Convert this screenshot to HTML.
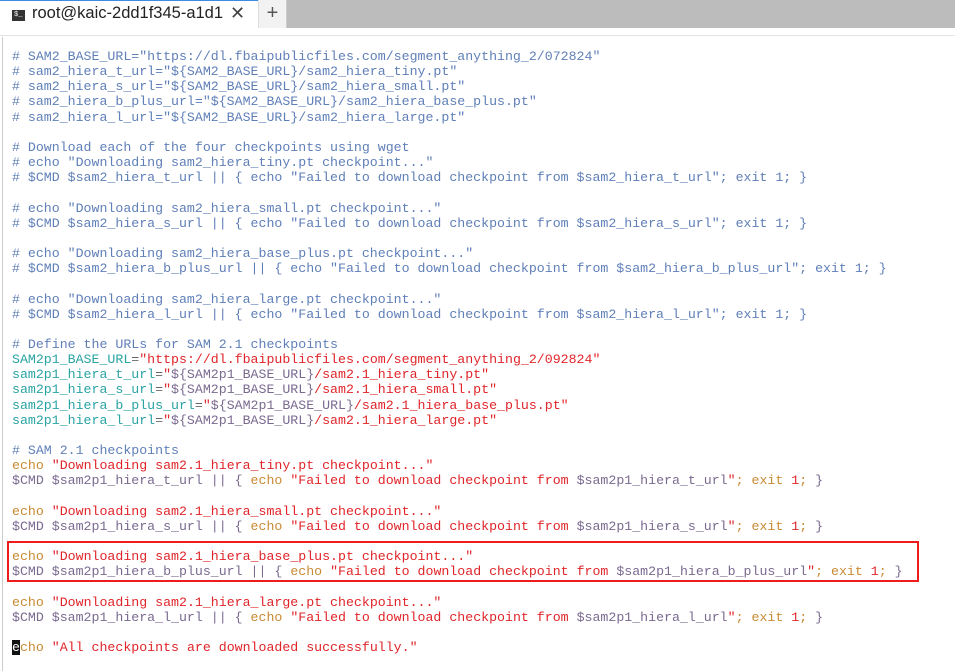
<!DOCTYPE html>
<html><head><meta charset="utf-8"><style>
*{margin:0;padding:0;box-sizing:border-box}
body{width:955px;height:671px;background:#fff;overflow:hidden;position:relative;font-family:"Liberation Mono",monospace}
.bar{position:absolute;left:0;top:0;width:955px;height:28px;background:#bcbcbc}
.tab{position:absolute;left:0;top:0;width:258px;height:28px;background:#fff;border-top:1px solid #3c8ce6}
.tab .ic{position:absolute;left:12px;top:9px;width:13px;height:11px;background:#333;color:#fff;font-size:7px;line-height:11px;padding-left:2px}
.tab .t{position:absolute;left:32px;top:3px;font-family:"Liberation Sans",sans-serif;font-size:16.5px;color:#222}
.tab .x{position:absolute;left:230px;top:2px;font-family:"Liberation Sans",sans-serif;font-size:18px;color:#444}
.plus{position:absolute;left:258px;top:0;width:29px;height:28px;background:#f2f2f2;border-left:1px solid #ddd;border-right:1px solid #ccc;text-align:center;font-family:"Liberation Sans",sans-serif;font-size:20px;line-height:26px;color:#555}
.sep{position:absolute;left:0;top:28px;width:955px;height:8px;background:#fff;border-bottom:1px solid #e2e2e2}
.lb{position:absolute;left:2px;top:37px;width:1px;height:634px;background:#ccc}
pre{position:absolute;left:12px;top:49px;font-family:"Liberation Mono",monospace;font-size:13.25px;line-height:15.15px;color:#333}
.c{color:#5f7fb8}.r{color:#e0252a}.o{color:#c98a33}.p{color:#7a6a90}.g{color:#2aa3a3}.k{color:#666}
.box{position:absolute;left:7px;top:541px;width:912px;height:41px;border:2px solid #ee1c1c}
.cur{background:#111;color:#fff}
</style></head><body>
<div class="bar"></div>
<div class="tab"><div class="ic">$_</div><div class="t">root@kaic-2dd1f345-a1d1</div><div class="x">✕</div></div>
<div class="plus">+</div>
<div class="sep"></div>
<div class="lb"></div>
<pre><span class="c"># SAM2_BASE_URL="https://dl.fbaipublicfiles.com/segment_anything_2/072824"
# sam2_hiera_t_url="${SAM2_BASE_URL}/sam2_hiera_tiny.pt"
# sam2_hiera_s_url="${SAM2_BASE_URL}/sam2_hiera_small.pt"
# sam2_hiera_b_plus_url="${SAM2_BASE_URL}/sam2_hiera_base_plus.pt"
# sam2_hiera_l_url="${SAM2_BASE_URL}/sam2_hiera_large.pt"

# Download each of the four checkpoints using wget
# echo "Downloading sam2_hiera_tiny.pt checkpoint..."
# $CMD $sam2_hiera_t_url || { echo "Failed to download checkpoint from $sam2_hiera_t_url"; exit 1; }

# echo "Downloading sam2_hiera_small.pt checkpoint..."
# $CMD $sam2_hiera_s_url || { echo "Failed to download checkpoint from $sam2_hiera_s_url"; exit 1; }

# echo "Downloading sam2_hiera_base_plus.pt checkpoint..."
# $CMD $sam2_hiera_b_plus_url || { echo "Failed to download checkpoint from $sam2_hiera_b_plus_url"; exit 1; }

# echo "Downloading sam2_hiera_large.pt checkpoint..."
# $CMD $sam2_hiera_l_url || { echo "Failed to download checkpoint from $sam2_hiera_l_url"; exit 1; }

# Define the URLs for SAM 2.1 checkpoints</span>
<span class="g">SAM2p1_BASE_URL</span><span class="k">=</span><span class="r">"https://dl.fbaipublicfiles.com/segment_anything_2/092824"</span>
<span class="g">sam2p1_hiera_t_url</span><span class="k">=</span><span class="r">"</span><span class="p">${SAM2p1_BASE_URL}</span><span class="r">/sam2.1_hiera_tiny.pt"</span>
<span class="g">sam2p1_hiera_s_url</span><span class="k">=</span><span class="r">"</span><span class="p">${SAM2p1_BASE_URL}</span><span class="r">/sam2.1_hiera_small.pt"</span>
<span class="g">sam2p1_hiera_b_plus_url</span><span class="k">=</span><span class="r">"</span><span class="p">${SAM2p1_BASE_URL}</span><span class="r">/sam2.1_hiera_base_plus.pt"</span>
<span class="g">sam2p1_hiera_l_url</span><span class="k">=</span><span class="r">"</span><span class="p">${SAM2p1_BASE_URL}</span><span class="r">/sam2.1_hiera_large.pt"</span>

<span class="c"># SAM 2.1 checkpoints</span>
<span class="o">echo</span> <span class="r">"Downloading sam2.1_hiera_tiny.pt checkpoint..."</span>
<span class="p">$CMD $sam2p1_hiera_t_url || {</span> <span class="o">echo</span> <span class="r">"Failed to download checkpoint from </span><span class="p">$sam2p1_hiera_t_url</span><span class="r">"</span><span class="o">; exit </span><span class="r">1</span><span class="o">;</span> <span class="p">}</span>

<span class="o">echo</span> <span class="r">"Downloading sam2.1_hiera_small.pt checkpoint..."</span>
<span class="p">$CMD $sam2p1_hiera_s_url || {</span> <span class="o">echo</span> <span class="r">"Failed to download checkpoint from </span><span class="p">$sam2p1_hiera_s_url</span><span class="r">"</span><span class="o">; exit </span><span class="r">1</span><span class="o">;</span> <span class="p">}</span>

<span class="o">echo</span> <span class="r">"Downloading sam2.1_hiera_base_plus.pt checkpoint..."</span>
<span class="p">$CMD $sam2p1_hiera_b_plus_url || {</span> <span class="o">echo</span> <span class="r">"Failed to download checkpoint from </span><span class="p">$sam2p1_hiera_b_plus_url</span><span class="r">"</span><span class="o">; exit </span><span class="r">1</span><span class="o">;</span> <span class="p">}</span>

<span class="o">echo</span> <span class="r">"Downloading sam2.1_hiera_large.pt checkpoint..."</span>
<span class="p">$CMD $sam2p1_hiera_l_url || {</span> <span class="o">echo</span> <span class="r">"Failed to download checkpoint from </span><span class="p">$sam2p1_hiera_l_url</span><span class="r">"</span><span class="o">; exit </span><span class="r">1</span><span class="o">;</span> <span class="p">}</span>

<span class="cur">e</span><span class="o">cho</span> <span class="r">"All checkpoints are downloaded successfully."</span></pre>
<div class="box"></div>
</body></html>
